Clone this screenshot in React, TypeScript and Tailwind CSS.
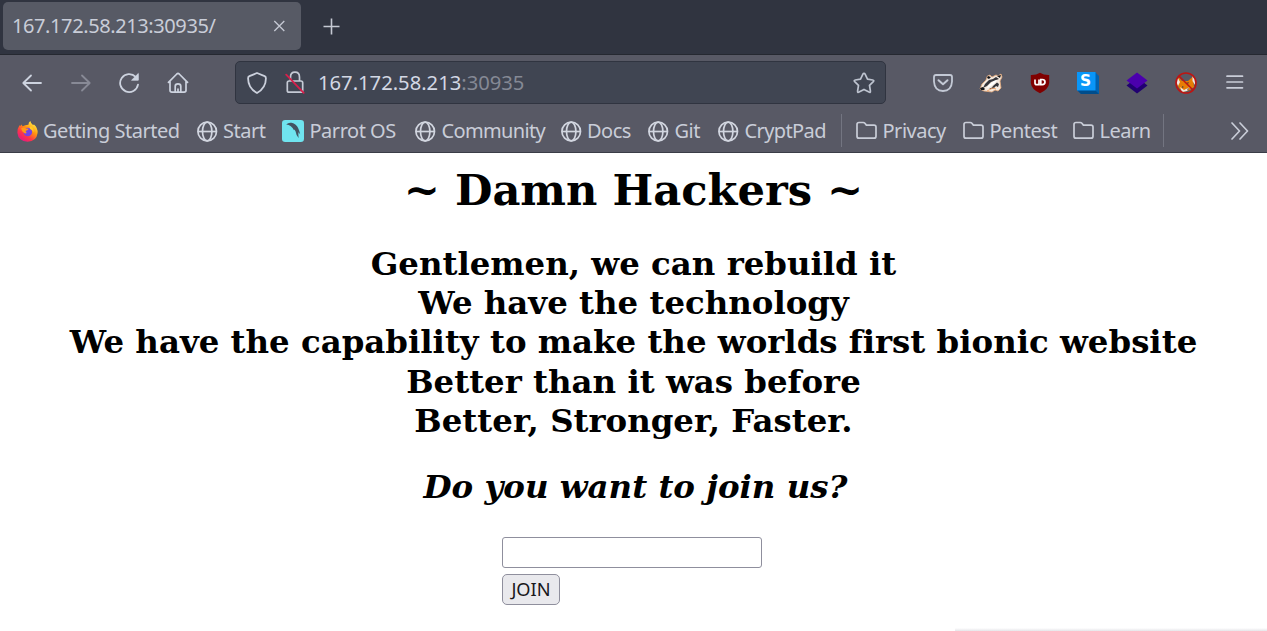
import type { ReactNode } from "react";

type IconProps = { className?: string };

const Globe = () => (
  <svg className="h-[21px] w-[21px] shrink-0" viewBox="0 0 21 21" fill="none" stroke="#d2d6e0" strokeWidth="1.7">
    <circle cx="10.2" cy="10.5" r="9.3" />
    <ellipse cx="10.2" cy="10.5" rx="4.7" ry="9.3" />
    <path d="M.9 10.5h18.6" />
  </svg>
);

const Folder = () => (
  <svg className="h-[21px] w-[21px] shrink-0" viewBox="0 0 21 21" fill="none" stroke="#c9cdd8" strokeWidth="1.7" strokeLinejoin="round">
    <path d="M1 3.5Q1 1.5 3 1.5H7.2Q8.2 1.5 8.9 2.3L10.4 4.1H18Q20 4.1 20 6.1V15.2Q20 17.2 18 17.2H3Q1 17.2 1 15.2Z" />
  </svg>
);

const Firefox = () => (
  <svg className="h-[21px] w-[21px] shrink-0" viewBox="0 0 21 21">
    <defs>
      <linearGradient id="flame" x1="0.85" y1="0.05" x2="0.2" y2="0.95">
        <stop offset="0" stopColor="#fff44f" />
        <stop offset=".38" stopColor="#ff980e" />
        <stop offset=".7" stopColor="#ff3647" />
        <stop offset="1" stopColor="#e31587" />
      </linearGradient>
    </defs>
    <path fill="url(#flame)" d="M11.4 3.7Q11.5 1.3 13.3 0Q13.7 2.3 16 4L17 3.5Q21 7 20.6 12Q19.5 20.4 10.6 20.8Q1.2 20.2 .4 11.7Q.3 7.4 2.5 4.3L3.4 5.1L4.3 3.4L5.7 5.2Q8.2 3.6 11.4 3.7Z" />
    <circle cx="10.8" cy="11" r="4.3" fill="#7542e5" />
    <path fill="#ff9a17" d="M4.1 7.2Q7.1 5.9 9.1 7.5L11.7 7.8Q10.6 9.7 8.8 9.7Q8.4 11 9.8 11.8Q8 13.3 6.3 11.3Q4.7 9.7 4.1 7.2Z" />
    <path fill="#ffca27" d="M14.2 5.3Q17 7.7 16.4 11.5Q15.8 8.8 13 8.1Q12 5.2 14.2 5.3Z" />
  </svg>
);

const Parrot = () => (
  <svg className="h-[22px] w-[22px] shrink-0" viewBox="0 0 22 22">
    <rect width="22" height="22" rx="3.2" fill="#70e4ef" />
    <path fill="#435463" d="M4.2 4.5Q6.5 2.2 9.5 2.8Q14.5 4.1 16.1 8Q17.3 10.5 18.2 14.3L16.4 12.2Q16.3 15 16.6 18Q14 15 13.5 11.3L12.4 9.5L12 10.2Q9.5 5.1 4.2 4.5Z" />
  </svg>
);

const Arrow = ({ className = "" }: IconProps) => (
  <svg className={`h-[22px] w-[22px] ${className}`} viewBox="0 0 22 22" fill="none" stroke="currentColor" strokeWidth="1.8" strokeLinecap="round" strokeLinejoin="round">
    <path d="M20 11H2.5M10 3.5L2.3 11L10 18.5" />
  </svg>
);

const Reload = () => (
  <svg className="h-[22px] w-[22px]" viewBox="0 0 22 22">
    <path d="M17.7 4.9A9 9 0 1 0 20 12.7" fill="none" stroke="#cdd3df" strokeWidth="1.8" strokeLinecap="round" />
    <path d="M20.3 1.5V8.2H13.6Z" fill="#cdd3df" stroke="#cdd3df" strokeWidth=".8" strokeLinejoin="round" />
  </svg>
);

const Home = () => (
  <svg className="h-[22px] w-[22px]" viewBox="0 0 22 22" fill="none" stroke="#cdd3df" strokeWidth="1.7" strokeLinecap="round" strokeLinejoin="round">
    <path d="M1.5 10.4L9.8 2Q11 .9 12.2 2L20.5 10.4M3 9.5V18.3Q3 20.2 4.9 20.2H17.1Q19 20.2 19 18.3V9.5M8.2 20V14.2Q8.2 11.8 11 11.8Q13.8 11.8 13.8 14.2V20M11 17V20" />
  </svg>
);

const Shield = () => (
  <svg className="h-[22px] w-[20px]" viewBox="0 0 20 22" fill="none" stroke="#cbd0dc" strokeWidth="1.8" strokeLinejoin="round">
    <path d="M10 1L17.6 4.2Q19 4.8 18.9 6.5Q18.9 16 10 21Q1.1 16 1.1 6.5Q1 4.8 2.4 4.2Z" />
  </svg>
);

const InsecureLock = () => (
  <svg className="h-[23px] w-[20px]" viewBox="0 0 20 23" fill="none">
    <path d="M5.5 10V6.2Q5.5 1.2 10 1.2Q14.5 1.2 14.5 6.2V10M4.1 10H15.9Q17.7 10 17.7 11.8V19.4Q17.7 21.2 15.9 21.2H4.1Q2.3 21.2 2.3 19.4V11.8Q2.3 10 4.1 10Z" stroke="#c5cad5" strokeWidth="1.7" />
    <path d="M1.2 3.7L18.7 21.8" stroke="#d81e4b" strokeWidth="1.8" strokeLinecap="round" />
  </svg>
);

const Star = () => (
  <svg className="h-[22px] w-[22px]" viewBox="0 0 22 22" fill="none" stroke="#bdc3cf" strokeWidth="1.7" strokeLinejoin="round">
    <path d="M11 1.4Q11.7 1.4 12.1 2.2L14.5 7.2L19.7 8Q21.5 8.3 20.3 9.6L16.5 13.4L17.4 19Q17.6 20.9 16 20.1L11 17.4L6 20.1Q4.4 20.9 4.6 19L5.5 13.4L1.7 9.6Q.5 8.3 2.3 8L7.5 7.2L9.9 2.2Q10.3 1.4 11 1.4Z" />
  </svg>
);

const Pocket = () => (
  <svg className="h-[18px] w-[20px]" viewBox="0 0 20 18" fill="none" stroke="#c3c9d5" strokeWidth="1.8" strokeLinecap="round" strokeLinejoin="round">
    <path d="M3 1H17Q19 1 19 3V7.5Q18.5 17 10 17Q1.5 17 1 7.5V3Q1 1 3 1Z" />
    <path d="M5.5 6.2L10 10.3L14.5 6.2" strokeWidth="2" />
  </svg>
);

const Badger = () => (
  <svg className="h-[20px] w-[24px]" viewBox="0 0 24 20">
    <path fill="#f4e9df" stroke="#e5a879" strokeWidth=".8" d="M1 16L3 11L7 7L8.4 3L11 2L13 4L17 2L19 3L22 1L23 4L21 8L22 15L19 18L16 17L13 19L5 18Z" />
    <path fill="#33343a" d="M6 11L10 7L14 6L17 4L20 6L17 7L12 9L8 13L4 15ZM14 13L18 9.5L20 11L19 14L17 13L14 16L10 16L13 14.5Z" />
    <path fill="#fff" d="M10 12L15 8L18 7L16 10L12 13L7 16Z" />
    <path fill="#141417" d="M1 15L4 14L6 16L5 17L2 17ZM9 3L12 4L10 6L8 5ZM18 3L22 2L21 5Z" />
    <path d="M8 18L14 15L17 16" fill="none" stroke="#f1a56b" strokeWidth="1" />
  </svg>
);

const UBlock = () => (
  <svg className="h-[22px] w-[20px]" viewBox="0 0 20 22" fill="none">
    <path d="M10 .8Q14 3.2 19.2 3V11Q18.6 17.3 10 21.3Q1.4 17.3 .8 11V3Q6 3.2 10 .8Z" fill="#800000" />
    <path d="M5 7.5V11Q5 12.7 6.8 12.7H9V7.5M10.8 7.5V12.7H12.2Q15 12.7 15 10.1Q15 7.5 12.2 7.5Z" stroke="#fff" strokeWidth="1.7" />
  </svg>
);

const SBox = () => (
  <div className="relative h-[22px] w-[22px]">
    <svg className="h-[22px] w-[22px]" viewBox="0 0 22 22">
      <path fill="#0062b1" d="M0 0H18L22 4V22H4L0 18Z" />
      <path fill="#004d8c" d="M0 18H18L22 22H4Z" />
      <path fill="#0996f8" d="M0 0H18.5V18.5H0Z" />
    </svg>
    <span className="absolute left-[3px] top-0 font-['DejaVu_Sans'] text-[15.5px] leading-[18px] font-bold text-white">S</span>
  </div>
);

const Layers = () => (
  <svg className="h-[22px] w-[22px]" viewBox="0 0 22 22">
    <path fill="#210071" d="M.5 13.5L5 10H17L21.5 13.5L11 21.5Z" />
    <path fill="#4b00ad" d="M11 .5L21.5 8.5L11 16.5L.5 8.5Z" />
  </svg>
);

const NoFox = () => (
  <svg className="h-[22px] w-[22px]" viewBox="0 0 22 22" fill="none">
    <path fill="#e77d05" d="M3.5 5L7 9H13L18 4.5L19 15L15 18L8 20L4 16L2 12Z" />
    <path fill="#eee8e4" d="M2.5 5L5 10L3 14L1.5 10ZM17.5 4L20 7L20 13L17.5 9ZM5 15L9 18L15 15L12 19L7 20Z" />
    <path fill="#4c4546" d="M11 11L14 10L13 12ZM7 14L9 15L7 16ZM12 17L14 16L13 18Z" />
    <circle cx="11" cy="11" r="10" stroke="#bd1513" strokeWidth="1.6" />
    <path d="M4 4L18 18" stroke="#bd1513" strokeWidth="1.5" />
  </svg>
);

function Bookmark({ icon, label, className }: { icon: ReactNode; label: string; className: string }) {
  return (
    <div className={`flex h-[30px] shrink-0 items-center whitespace-nowrap ${className}`}>
      <span className="flex w-[26.5px] shrink-0">{icon}</span>
      <span>{label}</span>
    </div>
  );
}

export default function App() {
  return (
    <div className="flex h-[631px] w-[1267px] flex-col overflow-hidden bg-white font-['Noto_Sans',sans-serif] text-[#c9cdd8]">
      <div className="flex h-[55px] shrink-0 items-start border-b border-[#252830] bg-[#303440] pt-[2px] pl-[3px]">
        <div className="flex h-[48px] w-[298px] items-center justify-between rounded-[5px] bg-[#575a65] pr-[15px] pl-[9px]">
          <span className="text-[20px] tracking-[-0.4px]">167.172.58.213:30935/</span>
          <svg className="h-[13px] w-[13px]" viewBox="0 0 13 13" stroke="#c5c9d3" strokeWidth="1.3"><path d="M1.3 1L11.3 11M11.3 1L1.3 11" /></svg>
        </div>
        <svg className="mt-[16px] ml-[22px] h-[17px] w-[17px]" viewBox="0 0 17 17" stroke="#c5c9d3" strokeWidth="1.6"><path d="M8.5 .5V16.5M.5 8.5H16.5" /></svg>
      </div>

      <div className="flex h-[55px] shrink-0 items-center bg-[#585965] pl-[21px]">
        <div className="flex w-[214px] items-center gap-[26.5px] text-[#cdd3df]">
          <Arrow />
          <Arrow className="rotate-180 text-[#888a96]" />
          <Reload />
          <Home />
        </div>
        <div className="flex h-[43px] w-[651px] items-center rounded-[5px] border border-[#303440] bg-[#404552] pr-[10px] pl-[11px]">
          <Shield />
          <span className="ml-[18px] flex"><InsecureLock /></span>
          <span className="ml-[13px] text-[20.2px] text-[#d3d8e4]">167.172.58.213<span className="text-[#858995]">:30935</span></span>
          <span className="ml-auto"><Star /></span>
        </div>
        <div className="ml-[47px] flex items-center">
          <span className="w-[46px]"><Pocket /></span>
          <span className="w-[51px]"><Badger /></span>
          <span className="w-[47px]"><UBlock /></span>
          <span className="w-[49px]"><SBox /></span>
          <span className="w-[49px]"><Layers /></span>
          <span className="w-[51px]"><NoFox /></span>
          <svg className="h-[15px] w-[18px]" viewBox="0 0 18 15" stroke="#c9cdd8" strokeWidth="1.7" strokeLinecap="round"><path d="M1 1.2H16.5M1 7H16.5M1 12.8H16.5" /></svg>
        </div>
      </div>

      <div className="flex h-[43px] shrink-0 items-start border-b border-[#3a3c47] bg-[#585965] pt-[6px] pl-[16.5px] text-[20px] tracking-[-0.48px]">
        <Bookmark icon={<Firefox />} label="Getting Started" className="w-[180px]" />
        <Bookmark icon={<Globe />} label="Start" className="w-[85.5px]" />
        <Bookmark icon={<Parrot />} label="Parrot OS" className="w-[133px] [&>span:first-child]:w-[27.5px]" />
        <Bookmark icon={<Globe />} label="Community" className="w-[145.5px] tracking-[-0.65px]" />
        <Bookmark icon={<Globe />} label="Docs" className="w-[87.5px]" />
        <Bookmark icon={<Globe />} label="Git" className="w-[70px]" />
        <Bookmark icon={<Globe />} label="CryptPad" className="w-[123px] tracking-[-0.6px]" />
        <div className="-mt-[2px] mr-[14px] h-[33px] w-px bg-[#737581]" />
        <Bookmark icon={<Folder />} label="Privacy" className="w-[107px]" />
        <Bookmark icon={<Folder />} label="Pentest" className="w-[110px]" />
        <Bookmark icon={<Folder />} label="Learn" className="w-[90px]" />
        <div className="-mt-[2px] mr-[67px] h-[33px] w-px bg-[#737581]" />
        <svg className="mt-[6px] h-[18px] w-[18px] shrink-0" viewBox="0 0 18 18" fill="none" stroke="#c9cdd8" strokeWidth="1.7" strokeLinecap="round" strokeLinejoin="round"><path d="M1 1L8.5 9L1 17M9 1L16.5 9L9 17" /></svg>
      </div>

      <main className="flex h-[478px] shrink-0 flex-col items-center overflow-hidden whitespace-nowrap bg-white font-['DejaVu_Serif',serif] text-black [font-variant-ligatures:none]">
        <h1 className="mt-[11px] text-[43.2px] leading-[52px] font-bold">~ Damn Hackers ~</h1>
        <h2 className="mt-[29px] text-center text-[32.4px] leading-[39.2px] font-bold">
          Gentlemen, we can rebuild it<br />
          We have the technology<br />
          We have the capability to make the worlds first bionic website<br />
          Better than it was before<br />
          Better, Stronger, Faster.
        </h2>
        <h2 className="mt-[27px] ml-[4px] text-[32.4px] leading-[39px] font-bold italic">Do you want to join us?</h2>
        <form className="mt-[30px] mr-[3px] flex w-[260px] flex-col items-start gap-[6px] font-['Noto_Sans',sans-serif]">
          <input aria-label="Name" className="h-[31px] w-[260px] rounded-[3px] border border-[#8f8f9d] bg-white px-2 outline-none" />
          <button type="button" className="h-[31px] w-[58px] rounded-[5px] border border-[#8f8f9d] bg-[#e9e9ed] text-[18.2px] leading-[29px] text-[#18181b]">JOIN</button>
        </form>
        <div className="mt-auto h-[3px] w-[312px] shrink-0 self-end bg-linear-to-b from-white to-[#e5e5e9]" />
      </main>
    </div>
  );
}
